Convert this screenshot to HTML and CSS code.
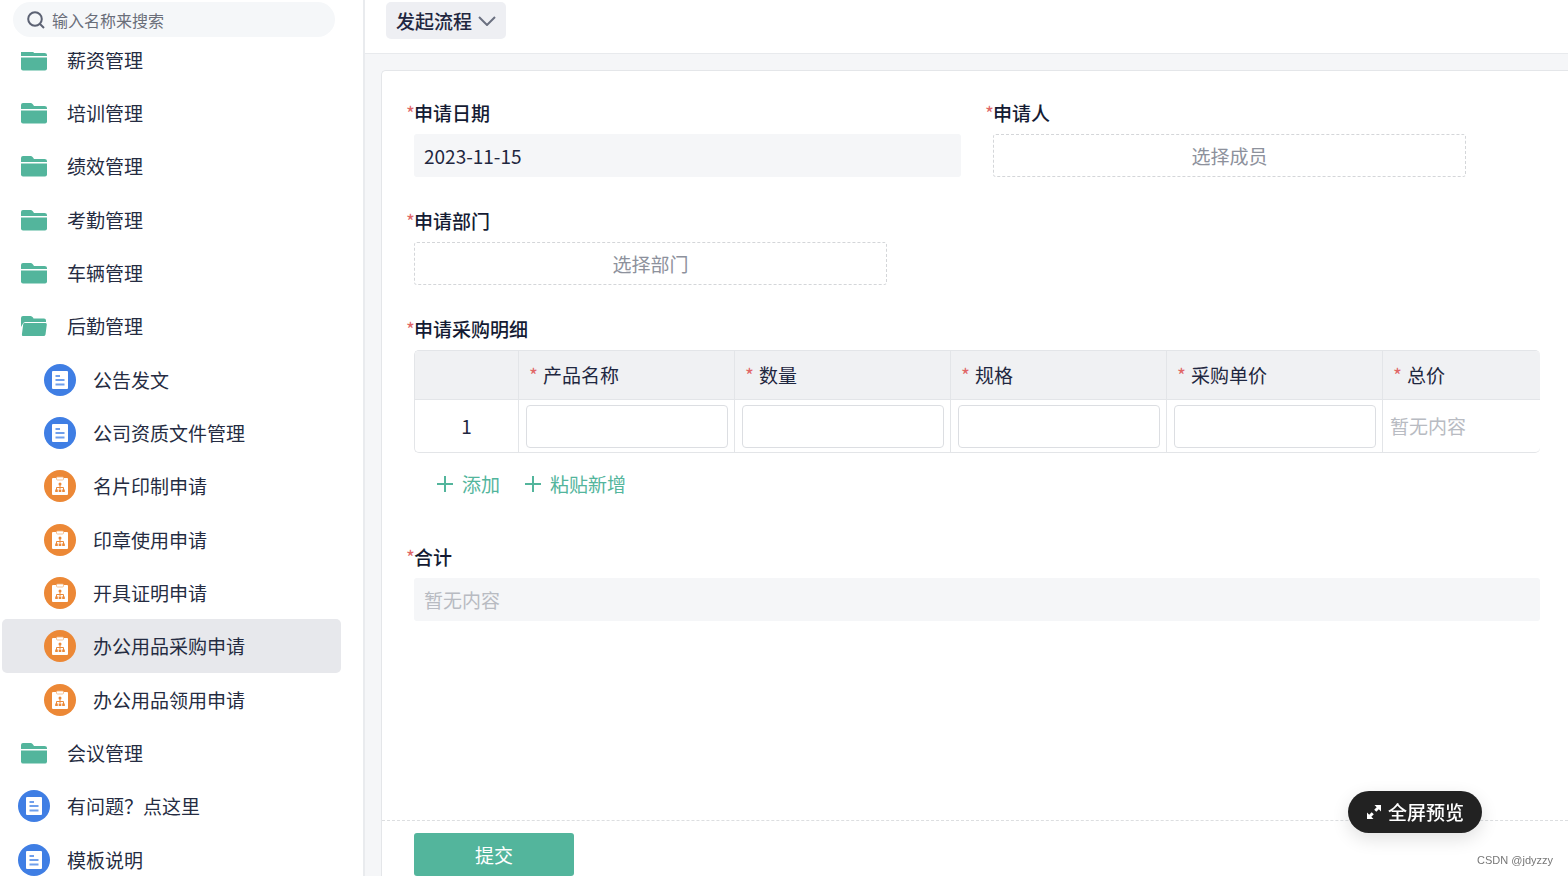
FILE: index.html
```html
<!DOCTYPE html>
<html lang="zh-CN">
<head>
<meta charset="utf-8">
<title>办公用品采购申请</title>
<link rel="stylesheet" href="styles.css">
</head>
<body>
<svg class="sprite" aria-hidden="true">
  <symbol id="folder" viewBox="0 0 26 22">
    <path d="M0 7V3Q0 1 2 1H10Q11 1 12 2.500L13 4H23.500Q26 4 26 6V7Z"/>
    <path d="M0 8.500H26V19.500Q26 21.500 24 21.500H2Q0 21.500 0 19.500Z"/>
  </symbol>
  <symbol id="folder-open" viewBox="0 0 26 22">
    <path d="M0 12V3Q0 1 2 1H9.500Q11 1 12 2.500L12.500 3.500H23Q25 3.500 25 5.500V7H4.500Q2.500 7 2 8.500Z"/>
    <path d="M3.500 8H24.500Q26 8 25.800 9.500L24.500 19.500Q24.200 21 22.500 21H2Q.7 21 .9 19.500L2.200 9.200Q2.400 8 3.500 8Z"/>
  </symbol>
  <symbol id="doc" viewBox="0 0 32 32">
    <circle cx="16" cy="16" r="16" fill="#3f7ee4"/>
    <rect x="8" y="7" width="16" height="18" rx="1" fill="#fff"/>
    <path d="M11.500 12H16M11.500 16H20.500M11.500 20.500H20.500" stroke="#6f9fec" stroke-width="1.800"/>
  </symbol>
  <symbol id="flow" viewBox="0 0 32 32">
    <circle cx="16" cy="16" r="16" fill="#ec8836"/>
    <rect x="8" y="8" width="16" height="17" rx="1" fill="#fff"/>
    <rect x="12.500" y="7" width="7" height="3" rx="1" fill="#fff" stroke="#f3b27c" stroke-width=".8"/>
    <path d="M16 14V19M12.500 20V17.500H19.500V20" fill="none" stroke="#ec8836"/>
    <circle cx="16" cy="14" r="1.500" fill="#ec8836"/>
    <path d="M11.200 19.500H13.800V22H11.200ZM14.700 19.500H17.300V22H14.700ZM18.200 19.500H20.800V22H18.200Z" fill="#ec8836"/>
  </symbol>
  <symbol id="plus" viewBox="0 0 18 18">
    <path d="M9 1V17M1 9H17" stroke="currentColor" stroke-width="2"/>
  </symbol>
</svg>

<div class="app">
  <aside class="sidebar">
    <label class="search">
      <svg class="search-icon" viewBox="0 0 18 18"><circle cx="8" cy="8" r="6.800"/><path d="M13 13L17 17"/></svg>
      <input type="text" placeholder="输入名称来搜索" aria-label="搜索">
    </label>
    <nav class="nav">
      <div class="nav-list">
        <a class="item" href="#"><svg class="folder"><use href="#folder"/></svg>薪资管理</a>
        <a class="item" href="#"><svg class="folder"><use href="#folder"/></svg>培训管理</a>
        <a class="item" href="#"><svg class="folder"><use href="#folder"/></svg>绩效管理</a>
        <a class="item" href="#"><svg class="folder"><use href="#folder"/></svg>考勤管理</a>
        <a class="item" href="#"><svg class="folder"><use href="#folder"/></svg>车辆管理</a>
        <a class="item" href="#"><svg class="folder"><use href="#folder-open"/></svg>后勤管理</a>
        <a class="item child" href="#"><svg class="badge"><use href="#doc"/></svg>公告发文</a>
        <a class="item child" href="#"><svg class="badge"><use href="#doc"/></svg>公司资质文件管理</a>
        <a class="item child" href="#"><svg class="badge"><use href="#flow"/></svg>名片印制申请</a>
        <a class="item child" href="#"><svg class="badge"><use href="#flow"/></svg>印章使用申请</a>
        <a class="item child" href="#"><svg class="badge"><use href="#flow"/></svg>开具证明申请</a>
        <a class="item child active" href="#"><svg class="badge"><use href="#flow"/></svg>办公用品采购申请</a>
        <a class="item child" href="#"><svg class="badge"><use href="#flow"/></svg>办公用品领用申请</a>
        <a class="item" href="#"><svg class="folder"><use href="#folder"/></svg>会议管理</a>
        <a class="item" href="#"><svg class="badge"><use href="#doc"/></svg>有问题？点这里</a>
        <a class="item" href="#"><svg class="badge"><use href="#doc"/></svg>模板说明</a>
      </div>
    </nav>
  </aside>

  <main class="main">
    <header class="topbar">
      <button class="flow-menu" type="button">发起流程
        <svg class="chevron" viewBox="0 0 18 10"><path d="M1 1L9 9L17 1"/></svg>
      </button>
    </header>

    <form class="card">
      <div class="fields">
        <div class="field">
          <label class="label" for="date"><span class="star">*</span>申请日期</label>
          <input class="box" id="date" type="text" value="2023-11-15" readonly>
        </div>
        <div class="field">
          <label class="label" for="member"><span class="star">*</span>申请人</label>
          <button class="picker" id="member" type="button">选择成员</button>
        </div>
        <div class="field dept">
          <label class="label" for="dept"><span class="star">*</span>申请部门</label>
          <button class="picker" id="dept" type="button">选择部门</button>
        </div>
        <div class="field wide">
          <span class="label" id="detail"><span class="star">*</span>申请采购明细</span>
          <div class="table-wrap">
            <table class="table" aria-labelledby="detail">
              <thead>
                <tr>
                  <th class="index"></th>
                  <th><span class="star">*</span>产品名称</th>
                  <th><span class="star">*</span>数量</th>
                  <th><span class="star">*</span>规格</th>
                  <th><span class="star">*</span>采购单价</th>
                  <th><span class="star">*</span>总价</th>
                </tr>
              </thead>
              <tbody>
                <tr>
                  <td class="index">1</td>
                  <td><input type="text" aria-label="产品名称"></td>
                  <td><input type="text" aria-label="数量"></td>
                  <td><input type="text" aria-label="规格"></td>
                  <td><input type="text" aria-label="采购单价"></td>
                  <td class="empty">暂无内容</td>
                </tr>
              </tbody>
            </table>
          </div>
          <div class="row-actions">
            <button type="button"><svg><use href="#plus"/></svg>添加</button>
            <button type="button"><svg><use href="#plus"/></svg>粘贴新增</button>
          </div>
        </div>
        <div class="field wide">
          <label class="label" for="total"><span class="star">*</span>合计</label>
          <input class="box" id="total" type="text" placeholder="暂无内容" readonly>
        </div>
      </div>
      <footer class="footer">
        <button class="submit" type="submit">提交</button>
      </footer>
    </form>
  </main>
</div>

<button class="preview" type="button">
  <svg viewBox="0 0 16 16"><path d="M8.500 1H15V7.500L12.800 5.300L10.300 7.800L8.200 5.700L10.700 3.200Z"/><path d="M7.500 15H1V8.500L3.200 10.700L5.700 8.200L7.800 10.300L5.300 12.800Z"/></svg>全屏预览
</button>
<span class="watermark">CSDN @jdyzzy</span>
</body>
</html>
```
FILE: styles.css
```css
* { box-sizing: border-box; }

body {
  margin: 0;
  height: 100vh;
  overflow: hidden;
  background: #fff;
  color: #1f2740;
  font: 19px/26px "Noto Sans CJK SC", sans-serif;
}

button, input { font: inherit; color: inherit; margin: 0; }
button { border: 0; background: none; padding: 0; cursor: pointer; }

.sprite { display: none; }
.app { display: flex; height: 100%; }

/* Sidebar */
.sidebar {
  flex: none;
  width: 365px;
  display: flex;
  flex-direction: column;
  border-right: 2px solid #e9ebee;
}
.search {
  display: flex;
  align-items: center;
  gap: 7px;
  flex: none;
  height: 35px;
  margin: 2px 28px 15px 13px;
  padding: 0 14px;
  border-radius: 18px;
  background: #f5f7f9;
}
.search-icon { width: 18px; height: 18px; fill: none; stroke: #5c6273; stroke-width: 2; }
.search input {
  flex: 1;
  min-width: 0;
  padding: 0;
  border: 0;
  outline: 0;
  background: none;
  font-size: 16px;
}
.search input::placeholder { color: #6a6e79; opacity: 1; }

.nav { flex: 1; min-height: 0; overflow: hidden; }
.nav-list {
  display: grid;
  grid-auto-rows: 53px 53px 54px;
  margin: -19px 22px 0 2px;
}
.item {
  display: flex;
  align-items: center;
  gap: 17px;
  padding-left: 16px;
  border-radius: 5px;
  color: #252c42;
  text-decoration: none;
}
.child { padding-left: 42px; }
.active { background: #e7e8ec; }
.folder { width: 26px; height: 22px; margin: 0 3px; fill: #53b59c; }
.badge { width: 32px; height: 32px; }

/* Main area */
.main {
  flex: 1;
  min-width: 0;
  display: flex;
  flex-direction: column;
  background: #f5f6f8;
}
.topbar {
  flex: none;
  height: 54px;
  padding: 2px 21px;
  border-bottom: 1px solid #e8eaed;
  background: #fff;
}
.flow-menu {
  display: flex;
  align-items: center;
  gap: 6px;
  height: 37px;
  padding: 0 10px;
  border-radius: 5px;
  background: #eeeff3;
  font-weight: 500;
}
.chevron { width: 18px; height: 10px; fill: none; stroke: #6b7080; stroke-width: 2; }

.card {
  flex: 1;
  display: flex;
  flex-direction: column;
  margin: 16px 0 0 16px;
  border: 1px solid #e4e6e9;
  border-width: 1px 0 0 1px;
  border-top-left-radius: 5px;
  background: #fff;
}
.fields {
  flex: 1;
  display: grid;
  grid-template-columns: 1fr 1fr;
  align-content: start;
  gap: 31px 32px;
  padding: 29px 28px 0 32px;
}
.field { display: flex; flex-direction: column; gap: 8px; min-width: 0; }
.dept { grid-column: 1; }
.wide { grid-column: 1 / -1; }

.label {
  display: flex;
  margin-left: -8px;
  font-weight: 500;
  color: #141b33;
}
.star { width: 8px; font-weight: 400; color: #e06666; }

.box {
  width: 100%;
  height: 43px;
  padding: 0 10px;
  border: 0;
  border-radius: 3px;
  outline: 0;
  background: #f5f6f8;
}
.box::placeholder { color: #b8bbc2; opacity: 1; }
.picker {
  width: 100%;
  max-width: 473px;
  height: 43px;
  border: 1px dashed #d4d6d9;
  border-radius: 3px;
  color: #8d919c;
}

.table-wrap {
  overflow: hidden;
  border: 1px solid #e3e5e8;
  border-right: 0;
  border-radius: 5px;
}
.table { width: 1184px; table-layout: fixed; border-collapse: separate; border-spacing: 0; }
.table th, .table td { border-right: 1px solid #e3e5e8; text-align: left; font-weight: 400; }
.table th { height: 49px; padding: 0 10px; border-bottom: 1px solid #e3e5e8; background: #f0f1f3; }
.table th .star { display: inline-block; width: 14px; }
.table td { height: 52px; padding: 0 6px 0 7px; }
.table .index { width: 104px; padding: 0; text-align: center; }
.table .empty { color: #b8bbc2; }
.table input {
  display: block;
  width: 100%;
  height: 43px;
  padding: 0 10px;
  border: 1px solid #dcdee2;
  border-radius: 4px;
  background: #fff;
}

.row-actions { display: flex; gap: 24px; padding: 10px 22px 16px; }
.row-actions button { display: flex; align-items: center; gap: 8px; color: #53b59c; }
.row-actions svg { width: 18px; height: 18px; }

.footer {
  flex: none;
  padding: 12px 32px 0;
  border-top: 1px dashed #dcdee0;
}
.submit {
  display: block;
  width: 160px;
  height: 43px;
  border-radius: 3px;
  background: #53b59c;
  color: #fff;
}

/* Floating elements */
.preview {
  position: fixed;
  right: 86px;
  bottom: 43px;
  display: flex;
  align-items: center;
  gap: 6px;
  height: 42px;
  padding: 0 18px;
  border-radius: 21px;
  background: #222;
  color: #fff;
  font-weight: 500;
  box-shadow: 0 6px 18px rgba(0, 0, 0, .12);
}
.preview svg { width: 16px; height: 16px; fill: #fff; }
.watermark {
  position: fixed;
  right: 15px;
  bottom: 8px;
  color: #777;
  font: 11px/16px "Liberation Sans", sans-serif;
}
```
